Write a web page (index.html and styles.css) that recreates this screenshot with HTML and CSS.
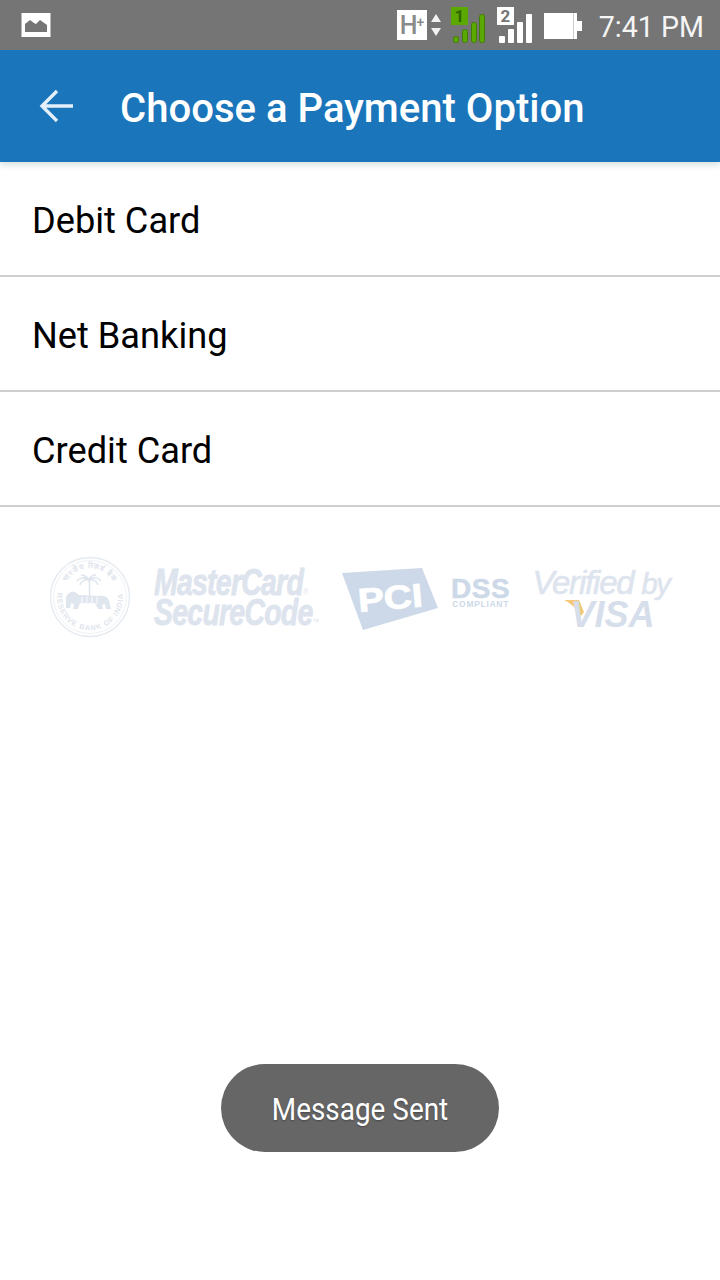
FILE: index.html
```html
<!DOCTYPE html>
<html lang="en">
<head>
  <meta charset="UTF-8">
  <meta name="viewport" content="width=device-width, initial-scale=1.0">
  <title>Choose a Payment Option</title>
  <link rel="stylesheet" href="styles.css">
</head>
<body>

  <div class="status-bar">
    <svg class="gallery-icon" width="30" height="24" viewBox="0 0 30 24">
      <rect width="29" height="24" x="0.5" fill="#fff"/>
      <path d="M4 19V11l5-4 4 3 2 1 4-4 7 5v7z" fill="#757575"/>
    </svg>
    <div class="status-right">
      <div class="net-type">
        <span class="net-box">H<sup>+</sup></span>
        <svg width="12" height="26" viewBox="0 0 12 26">
          <path d="M6 2l5 8H1zM1 16h10l-5 8z" fill="#f2f2f2"/>
        </svg>
      </div>
      <div class="sim">
        <span class="sim-num sim-green">1</span>
        <svg width="36" height="36" viewBox="0 0 36 36">
          <g fill="#5aa800" stroke="#3f7f00">
            <rect x="2.5" y="29.5" width="5" height="6" rx="2"/>
            <rect x="11.5" y="22.5" width="5" height="13" rx="2"/>
            <rect x="20.5" y="15.5" width="5" height="20" rx="2"/>
            <rect x="28.5" y="7.5" width="5" height="28" rx="2"/>
          </g>
        </svg>
      </div>
      <div class="sim">
        <span class="sim-num">2</span>
        <svg width="36" height="36" viewBox="0 0 36 36">
          <g fill="#fff">
            <rect x="2" y="29" width="6" height="7" rx="1"/>
            <rect x="11" y="22" width="6" height="14" rx="1"/>
            <rect x="20" y="15" width="6" height="21" rx="1"/>
            <rect x="29" y="7" width="6" height="29" rx="1"/>
          </g>
        </svg>
      </div>
      <svg class="battery" width="39" height="26" viewBox="0 0 39 26">
        <path d="M0 0h33v8h5v10h-5v8H0z" fill="#fff"/>
        <rect x="29" y="0" width="1" height="26" fill="#ccc"/>
      </svg>
      <span class="clock">7:41 PM</span>
    </div>
  </div>

  <header class="app-bar">
    <svg class="back" width="36" height="36" viewBox="0 0 36 36">
      <path d="M34 18H4M18 3L3 18l15 15" fill="none" stroke="#e3f0fa" stroke-width="3.4"/>
    </svg>
    <h1>Choose a Payment Option</h1>
  </header>

  <ul class="options">
    <li>Debit Card</li>
    <li>Net Banking</li>
    <li>Credit Card</li>
  </ul>

  <div class="trust-logos">
    <svg class="rbi" width="82" height="82" viewBox="0 0 82 82">
      <defs>
        <path id="rbi-bottom" d="M10 30A33 33 0 1 0 72 30"/>
        <path id="rbi-top" d="M14 33A28 28 0 0 1 68 33"/>
      </defs>
      <circle cx="41" cy="41" r="39.5" fill="none" stroke="#e6ebf1" stroke-width="1.4"/>
      <circle cx="41" cy="41" r="36.5" fill="none" stroke="#eff2f6" stroke-width="1"/>
      <text class="rbi-text"><textPath href="#rbi-bottom" startOffset="50%" text-anchor="middle">RESERVE BANK OF INDIA</textPath></text>
      <text class="rbi-text"><textPath href="#rbi-top" startOffset="50%" text-anchor="middle">भारतीय रिज़र्व बैंक</textPath></text>
      <path d="M41 46C40 38 41 30 40 22M40 24c-4-3-9-3-12 1M40 24c-4-1-8 1-9 5M40 24c-2-3-5-5-8-5M40 24c1-3 4-5 7-5M40 24c4-3 9-3 12 1M40 24c4-1 8 1 9 5" fill="none" stroke="#dde4ec" stroke-width="1.5"/>
      <path d="M17 42c1-5 5-7 9-6 2 1 3 3 5 3l18 1c5-1 10 0 11 5l2 8h-5l-1-5-3 1 1 4h-5l-3-6H31l-2 6h-5l1-5-3-1-1 5h-4z" fill="#e0e6ee"/>
      <path d="M33 41v7M38 41v7M43 41v7M48 41v7" stroke="#f4f6f9" stroke-width="1.4"/>
    </svg>

    <div class="mc-logo">
      <span>MasterCard<small>®</small></span>
      <span>SecureCode<small>™</small></span>
    </div>

    <div class="pci-logo">
      <div class="pci-badge">
        <svg width="98" height="63" viewBox="0 0 98 63">
          <path d="M1 5L81 0l16 40-75 22z" fill="#cdd9e8"/>
        </svg>
        <span class="pci-text">PCI</span>
      </div>
      <div class="dss">
        <span class="dss-big">DSS</span>
        <span class="dss-small">COMPLIANT</span>
      </div>
    </div>

    <div class="visa-logo">
      <span class="visa-top">Verified <small>by</small></span>
      <div class="visa-bottom">
        <svg class="visa-tick" width="20" height="17" viewBox="0 0 20 17">
          <path d="M0 1h15l5 12-3 4C13 10 8 5 0 1z" fill="#f4c777"/>
        </svg>
        <span>VISA</span>
      </div>
    </div>
  </div>

  <div class="toast"><span>Message Sent</span></div>

</body>
</html>
```

FILE: styles.css
```css
html, body {
  margin: 0;
  padding: 0;
}

body {
  position: relative;
  width: 720px;
  height: 1280px;
  overflow: hidden;
  background: #fff;
  font-family: Roboto, "Liberation Sans", sans-serif;
}

.status-bar {
  height: 50px;
  background: #757575;
  display: flex;
  justify-content: space-between;
  align-items: center;
  padding: 0 16px 0 21px;
  box-sizing: border-box;
  color: #fff;
}

.status-right {
  display: flex;
  align-items: center;
}

.net-type {
  display: flex;
  align-items: center;
  gap: 3px;
  margin-right: 9px;
}

.net-box {
  width: 30px;
  height: 30px;
  background: #fff;
  color: #8a8a8a;
  font-size: 25px;
  font-weight: 500;
  line-height: 31px;
  letter-spacing: -1px;
  padding-left: 3px;
  box-sizing: border-box;
  overflow: hidden;
}

.net-box sup {
  font-size: 14px;
  line-height: 0;
  vertical-align: 7px;
}

.sim {
  position: relative;
  width: 36px;
  height: 36px;
  margin-right: 10px;
}

.sim svg {
  display: block;
}

.sim-num {
  position: absolute;
  left: 0;
  top: 0;
  width: 17px;
  height: 18px;
  background: #fff;
  color: #757575;
  font-size: 17px;
  font-weight: 700;
  line-height: 18px;
  text-align: center;
}

.sim-green {
  background: #5aa800;
  color: #2f6600;
}

.battery {
  margin-left: 1px;
  margin-right: 16px;
  margin-top: 2px;
}

.clock {
  font-size: 28.6px;
  line-height: 32px;
  margin-top: 4px;
  color: #f5f5f5;
}

.app-bar {
  height: 112px;
  background: #1a75bb;
  display: flex;
  align-items: center;
  box-shadow: 0 3px 6px rgba(90, 130, 130, 0.25);
  position: relative;
}

.back {
  margin-left: 39px;
  margin-right: 45px;
}

.app-bar h1 {
  margin: 5px 0 0;
  color: #fff;
  font-size: 40.1px;
  font-weight: 500;
}

.options {
  list-style: none;
  margin: 0;
  padding: 0;
}

.options li {
  height: 115px;
  box-sizing: border-box;
  border-bottom: 2px solid #cfcfcf;
  padding: 2px 0 0 32px;
  font-size: 36.2px;
  line-height: 113px;
  color: #000;
}

.trust-logos {
  display: flex;
  align-items: center;
  padding: 49px 0 0 49px;
}

.rbi {
  flex: none;
}

.rbi-text {
  font-size: 7.4px;
  font-weight: 700;
  fill: #dfe5ed;
  letter-spacing: 0.9px;
  font-family: "Liberation Sans", sans-serif;
}

.mc-logo {
  display: flex;
  flex-direction: column;
  margin-left: 23px;
  width: 170px;
  margin-top: 2px;
  color: #dde4ee;
  font-family: "Liberation Sans", sans-serif;
  font-size: 37px;
  font-weight: 700;
  font-style: italic;
  line-height: 30px;
  letter-spacing: -1px;
  -webkit-text-stroke: 0.8px #dde4ee;
  transform: scaleX(0.77);
  transform-origin: left center;
  white-space: nowrap;
}

.mc-logo small {
  font-size: 9px;
  font-weight: 400;
  line-height: 0;
  -webkit-text-stroke: 0;
}

.pci-logo {
  display: flex;
  align-items: center;
  margin: 5px 0 0 17px;
}

.pci-badge {
  position: relative;
  width: 98px;
  height: 63px;
}

.pci-badge svg {
  display: block;
}

.pci-text {
  position: absolute;
  left: 17px;
  top: 15px;
  color: #fff;
  font-family: "Liberation Sans", sans-serif;
  font-size: 33px;
  font-weight: 700;
  line-height: 36px;
  -webkit-text-stroke: 0.8px #fff;
  transform: rotate(-5deg) scaleX(1.18);
  transform-origin: left center;
}

.dss {
  display: flex;
  flex-direction: column;
  align-items: center;
  margin: 0 0 12px 12px;
  color: #cdd9e8;
  font-family: "Liberation Sans", sans-serif;
  font-weight: 700;
}

.dss-big {
  font-size: 28px;
  line-height: 22px;
  letter-spacing: 0.6px;
  -webkit-text-stroke: 0.5px #cdd9e8;
}

.dss-small {
  font-size: 8.5px;
  line-height: 9px;
  letter-spacing: 0.7px;
}

.visa-logo {
  display: flex;
  flex-direction: column;
  margin: 3px 0 0 22px;
  color: #dde4ee;
  font-family: "Liberation Sans", sans-serif;
  font-style: italic;
}

.visa-top {
  font-size: 33px;
  line-height: 32px;
  letter-spacing: -1.2px;
  -webkit-text-stroke: 0.6px #dde4ee;
  white-space: nowrap;
}

.visa-top small {
  font-size: 29px;
  line-height: 0;
}

.visa-bottom {
  display: flex;
  align-items: flex-start;
  margin-left: 32px;
  font-size: 36px;
  line-height: 32px;
  font-weight: 700;
  color: #d5deea;
}

.visa-tick {
  margin-right: -14px;
}

.toast {
  position: absolute;
  left: 221px;
  top: 1064px;
  width: 278px;
  height: 88px;
  border-radius: 44px;
  background: #666;
  color: #fff;
  display: flex;
  justify-content: center;
  align-items: center;
  font-size: 31px;
  text-shadow: 0 1px 2px rgba(0, 0, 0, 0.3);
}

.toast span {
  margin-top: 2px;
  white-space: nowrap;
  transform: scaleX(0.9);
}
```
